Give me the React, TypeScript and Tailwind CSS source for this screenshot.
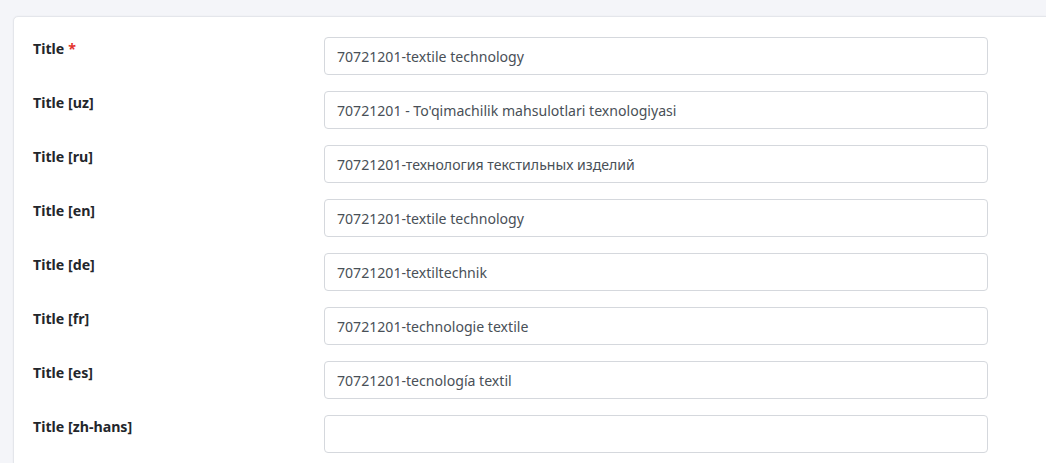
const rows: { label: string; value: string; required?: boolean }[] = [
  { label: "Title", value: "70721201-textile technology", required: true },
  { label: "Title [uz]", value: "70721201 - To'qimachilik mahsulotlari texnologiyasi" },
  { label: "Title [ru]", value: "70721201-технология текстильных изделий" },
  { label: "Title [en]", value: "70721201-textile technology" },
  { label: "Title [de]", value: "70721201-textiltechnik" },
  { label: "Title [fr]", value: "70721201-technologie textile" },
  { label: "Title [es]", value: "70721201-tecnología textil" },
  { label: "Title [zh-hans]", value: "" },
];

export default function App() {
  return (
    <div
      className="h-[463px] overflow-hidden bg-[#f4f5f9] pt-4 pl-[13px]"
      style={{ fontFamily: '"Noto Sans", "Noto Sans CJK SC", sans-serif' }}
    >
      <div className="h-[600px] w-[1100px] rounded-tl-[5px] border border-[#e4e6eb] bg-white pl-[19px] pt-5 shadow-[0_0_2px_rgba(0,0,0,0.05)]">
        <div className="flex flex-col gap-4">
          {rows.map((r) => (
            <div key={r.label} className="flex items-start">
              <label className="w-[291px] pt-[1px] text-[14.2px] leading-[21px] font-bold text-[#23262b]">
                {r.label}
                {r.required && <span className="ml-1 text-[#e3342f]">*</span>}
              </label>
              <input
                readOnly
                value={r.value}
                className="h-[38px] w-[664px] rounded-[4px] border border-[#d5d8dd] bg-white px-3 text-[14.1px] text-[#495057] outline-none"
              />
            </div>
          ))}
        </div>
      </div>
    </div>
  );
}
